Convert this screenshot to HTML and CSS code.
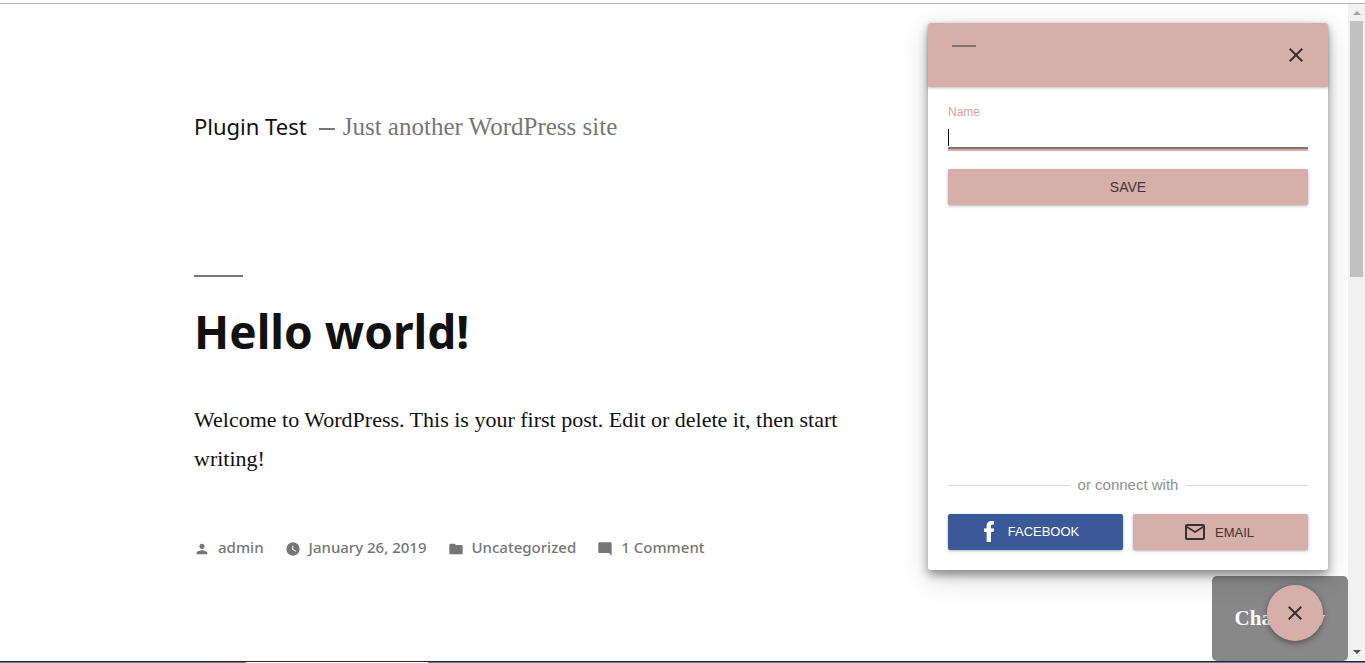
FILE: index.html
```html
<!DOCTYPE html>
<html lang="en">
<head>
<meta charset="utf-8">
<meta name="viewport" content="width=device-width, initial-scale=1">
<title>Plugin Test</title>
<link rel="stylesheet" href="styles.css">
</head>
<body>
<div class="window">
  <div class="viewport">
    <main class="site">
      <header class="site-header">
        <a class="site-title" href="#">Plugin Test</a>
        <span class="site-dash"></span>
        <span class="site-tagline">Just another WordPress site</span>
      </header>
      <article class="post">
        <h1 class="post-title">Hello world!</h1>
        <p class="post-text">Welcome to WordPress. This is your first post. Edit or delete it, then start writing!</p>
        <footer class="post-meta">
          <a class="meta-item" href="#"><svg class="meta-icon" viewBox="0 0 24 24"><path d="M12 12c2.210 0 4-1.790 4-4s-1.790-4-4-4-4 1.790-4 4 1.790 4 4 4zm0 2c-2.670 0-8 1.340-8 4v2h16v-2c0-2.660-5.330-4-8-4z"/></svg>admin</a>
          <a class="meta-item" href="#"><svg class="meta-icon" viewBox="0 0 24 24"><path fill-rule="evenodd" d="M12 2a10 10 0 1 0 0 20 10 10 0 0 0 0-20zm4.200 14.200L11 13V7h1.500v5.200l4.500 2.700-.800 1.300z"/></svg>January 26, 2019</a>
          <a class="meta-item" href="#"><svg class="meta-icon" viewBox="0 0 24 24"><path d="M10 4H4c-1.100 0-2 .900-2 2v12c0 1.100.900 2 2 2h16c1.100 0 2-.900 2-2V8c0-1.100-.900-2-2-2h-8l-2-2z"/></svg>Uncategorized</a>
          <a class="meta-item" href="#"><svg class="meta-icon" viewBox="0 0 24 24"><path d="M22 4c0-1.100-.900-2-2-2H4c-1.100 0-2 .900-2 2v12c0 1.100.900 2 2 2h14l4 4V4z"/></svg>1 Comment</a>
        </footer>
      </article>
    </main>

    <button class="chat-now" type="button">Chat Now</button>

    <section class="popup" aria-label="Chat">
      <header class="popup-header">
        <span class="popup-rule"></span>
        <button class="popup-close" type="button" aria-label="Close"><svg class="icon" viewBox="0 0 24 24"><path d="M19 6.410L17.590 5 12 10.590 6.410 5 5 6.410 10.590 12 5 17.590 6.410 19 12 13.410 17.590 19 19 17.590 13.410 12z"/></svg></button>
      </header>
      <form class="popup-body">
        <label class="field-label" for="name">Name</label>
        <input class="field-input" id="name" type="text">
        <button class="btn" type="button">SAVE</button>
        <div class="divider">or connect with</div>
        <div class="connect">
          <button class="btn btn-facebook" type="button"><svg class="icon-f" viewBox="0 0 10 21"><path d="M2.600 21V11H0V7.500h2.600V5C2.600 1.700 4.400 0 7.400 0H10v3.600H8.400C7.300 3.600 7 4.200 7 5.200v2.300h3L9.600 11H7v10z"/></svg>FACEBOOK</button>
          <button class="btn btn-email" type="button"><svg class="icon" viewBox="0 0 24 24"><path d="M20 4H4c-1.100 0-1.990.900-1.990 2L2 18c0 1.100.900 2 2 2h16c1.100 0 2-.900 2-2V6c0-1.100-.900-2-2-2zm0 14H4V8l8 5 8-5v10zm-8-7L4 6h16l-8 5z"/></svg>EMAIL</button>
        </div>
      </form>
    </section>

    <button class="fab" type="button" aria-label="Close chat"><svg class="icon" viewBox="0 0 24 24"><path d="M19 6.410L17.590 5 12 10.590 6.410 5 5 6.410 10.590 12 5 17.590 6.410 19 12 13.410 17.590 19 19 17.590 13.410 12z"/></svg></button>
  </div>
  <div class="scrollbar">
    <svg class="arrow arrow-up" viewBox="0 0 8 4"><path d="M0 4L4 0l4 4z"/></svg>
    <div class="thumb"></div>
    <svg class="arrow arrow-down" viewBox="0 0 8 4"><path d="M0 0h8L4 4z"/></svg>
  </div>
</div>
<div class="taskbar"></div>
</body>
</html>
```
FILE: styles.css
```css
* { box-sizing: border-box; }

body {
  margin: 0;
  min-height: 100vh;
  display: flex;
  flex-direction: column;
  padding-top: 3px;
  background: #fff;
  color: #111;
  font-family: "Liberation Sans", Arial, sans-serif;
}

button { font-family: inherit; border: 0; cursor: pointer; }
a { color: inherit; text-decoration: none; }

.window {
  flex: 1;
  display: flex;
  border-top: 1px solid #b4b4b4;
}

.viewport {
  position: relative;
  flex: 1;
  overflow: hidden;
}

.site { padding: 103px 500px 40px 194px; }

.site-header {
  display: flex;
  align-items: center;
  height: 40px;
}
.site-title {
  font: 400 22px/38px "Noto Sans", sans-serif;
  color: #111;
  padding-bottom: 2px;
}
.site-dash {
  width: 16px;
  height: 2px;
  margin: 4px 8px 0 12px;
  background: #767676;
}
.site-tagline {
  font: 400 25px/40px "Liberation Serif", serif;
  color: #767676;
}

.post { margin-top: 128px; }
.post-title {
  margin: 0;
  font: 700 46px/60px "Noto Sans", sans-serif;
}
.post-title::before {
  content: "";
  display: block;
  width: 49px;
  height: 2px;
  margin-bottom: 24px;
  background: #767676;
}
.post-text {
  margin: 39px 0 0;
  font: 400 22px/39px "Liberation Serif", serif;
}

.post-meta {
  display: flex;
  gap: 21px;
  margin-top: 57px;
  font: 500 15px/24px "Noto Sans", sans-serif;
  color: #767676;
}
.meta-item {
  display: flex;
  align-items: center;
  gap: 8px;
  white-space: nowrap;
}
.meta-icon {
  width: 16px;
  height: 16px;
  margin-top: 3px;
  fill: #767676;
}

.chat-now {
  position: absolute;
  right: 0;
  bottom: 0;
  padding: 20px 23px;
  border-radius: 5px;
  background: #888;
  color: #fff;
  font: 700 21px/45px "Liberation Serif", serif;
}

.popup {
  position: absolute;
  top: 19px;
  right: 20px;
  bottom: 91px;
  width: 400px;
  display: flex;
  flex-direction: column;
  border-radius: 3px;
  background: #fff;
  box-shadow: 0 5px 10px rgba(0, 0, 0, .4), 0 8px 30px rgba(0, 0, 0, .16);
}
.popup-header {
  display: flex;
  justify-content: space-between;
  height: 64px;
  padding: 20px 20px 20px 24px;
  border-radius: 3px 3px 0 0;
  background: #d6aeaa;
  box-shadow: 0 1px 3px rgba(0, 0, 0, .25);
}
.popup-rule {
  width: 24px;
  height: 2px;
  margin-top: 2px;
  background: #857371;
}
.popup-close {
  padding: 0;
  background: none;
}
.icon {
  display: block;
  width: 24px;
  height: 24px;
  fill: #38302f;
}

.popup-body {
  flex: 1;
  display: flex;
  flex-direction: column;
  padding: 17px 20px 20px;
}
.field-label {
  font-size: 12px;
  line-height: 16px;
  color: #d6a09b;
}
.field-input {
  width: 100%;
  height: 29px;
  margin: 0 0 20px;
  padding: 0;
  border: 0;
  border-bottom: 2px solid #857371;
  box-shadow: 0 2px 0 #d6aeaa;
  background: linear-gradient(#111, #111) 0 9px / 1px 17px no-repeat;
  font: 400 15px/20px "Liberation Sans", Arial, sans-serif;
  caret-color: #111;
  outline: 0;
}
.btn {
  display: flex;
  align-items: center;
  justify-content: center;
  height: 36px;
  padding: 0;
  border-radius: 2px;
  background: #d6aeaa;
  box-shadow: 0 1px 3px rgba(0, 0, 0, .3);
  color: #423635;
  font-size: 14px;
}

.divider {
  display: flex;
  align-items: center;
  gap: 8px;
  margin-top: auto;
  font-size: 15px;
  line-height: 20px;
  color: #909090;
}
.divider::before,
.divider::after {
  content: "";
  flex: 1;
  height: 1px;
  background: #d8d8d8;
}

.connect {
  display: grid;
  grid-template-columns: 1fr 1fr;
  gap: 10px;
  margin-top: 19px;
}
.btn-facebook {
  gap: 14px;
  padding: 0 8px 2px 0;
  background: #3b5998;
  color: #fff;
  font-size: 13px;
}
.btn-email {
  gap: 8px;
  padding-right: 4px;
  font-size: 13px;
}
.icon-f {
  width: 10px;
  height: 21px;
  fill: #fff;
}

.fab {
  position: absolute;
  right: 25px;
  bottom: 20px;
  width: 56px;
  height: 56px;
  display: flex;
  align-items: center;
  justify-content: center;
  padding: 0;
  border-radius: 50%;
  background: #d6aeaa;
  box-shadow: 0 2px 6px rgba(0, 0, 0, .4);
}

.scrollbar {
  display: flex;
  flex-direction: column;
  align-items: center;
  width: 17px;
  padding: 7px 2px;
  background: #f1f1f1;
}
.arrow { width: 8px; height: 4px; }
.arrow-up { fill: #a3a3a3; }
.arrow-down { margin-top: auto; fill: #505050; }
.thumb {
  width: 13px;
  height: 256px;
  margin-top: 6px;
  background: #c1c1c1;
}

.taskbar {
  height: 2px;
  border-top: 1px solid #24243c;
  background: linear-gradient(90deg, #77778f 246px, #fff 246px, #fff 428px, #77778f 428px);
}
```
